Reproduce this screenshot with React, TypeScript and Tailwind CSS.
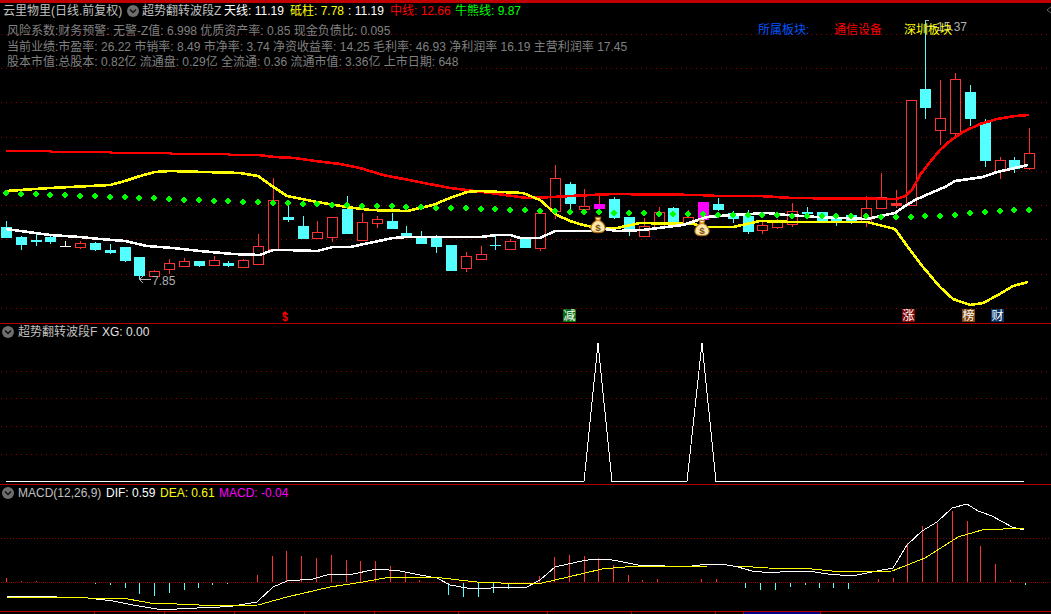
import React from 'react';

type Kind = 'r' | 'c' | 'w' | 'm' | 'R';
// top, bottom, wick top, wick bottom, kind
const candles: [number, number, number, number, Kind][] = [
  [227, 237, 221, 238, 'c'], [237, 244, 236, 250, 'c'], [240, 241, 233, 246, 'c'], [237, 241, 236, 244, 'c'],
  [246, 246, 241, 246, 'w'], [243, 247, 241, 249, 'r'], [243, 249, 242, 251, 'c'], [250, 252, 244, 254, 'c'],
  [247, 260, 247, 262, 'c'], [257, 275, 257, 280, 'c'], [271, 276, 270, 277, 'r'], [263, 269, 259, 274, 'r'],
  [261, 266, 258, 267, 'r'], [261, 265, 261, 267, 'c'], [260, 265, 256, 266, 'r'], [263, 265, 261, 267, 'c'],
  [260, 267, 259, 267, 'r'], [246, 264, 234, 264, 'r'], [200, 249, 178, 249, 'r'], [217, 219, 205, 222, 'c'],
  [226, 238, 216, 239, 'c'], [232, 238, 221, 239, 'r'], [217, 237, 217, 242, 'r'], [209, 233, 196, 233, 'c'],
  [222, 240, 213, 241, 'r'], [219, 223, 216, 228, 'r'], [221, 228, 213, 229, 'c'], [233, 237, 226, 237, 'c'],
  [237, 243, 231, 243, 'c'], [238, 246, 235, 253, 'c'], [245, 270, 245, 270, 'c'], [256, 268, 252, 272, 'r'],
  [254, 259, 246, 260, 'r'], [245, 245, 236, 250, 'c'], [241, 249, 239, 249, 'r'], [238, 247, 238, 248, 'c'],
  [213, 248, 213, 251, 'r'], [178, 211, 165, 219, 'r'], [184, 203, 182, 210, 'c'], [206, 209, 189, 215, 'r'],
  [204, 208, 196, 208, 'm'], [199, 217, 197, 219, 'c'], [217, 231, 217, 236, 'c'], [226, 236, 218, 237, 'r'],
  [212, 227, 207, 227, 'r'], [208, 221, 207, 221, 'c'], [217, 223, 210, 223, 'r'], [202, 219, 202, 219, 'm'],
  [204, 209, 198, 211, 'c'], [213, 218, 211, 223, 'c'], [216, 231, 210, 234, 'c'], [225, 230, 221, 234, 'r'],
  [222, 227, 219, 229, 'r'], [211, 224, 203, 227, 'r'], [212, 213, 207, 214, 'c'], [212, 221, 212, 221, 'c'],
  [219, 221, 213, 226, 'c'], [215, 222, 215, 224, 'c'], [208, 222, 196, 227, 'r'], [197, 208, 173, 208, 'r'],
  [203, 205, 190, 208, 'R'], [100, 205, 100, 205, 'r'], [89, 107, 20, 119, 'c'], [118, 130, 80, 145, 'r'],
  [79, 133, 73, 137, 'r'], [92, 118, 85, 126, 'c'], [122, 160, 119, 167, 'c'], [160, 171, 157, 179, 'r'],
  [160, 168, 157, 173, 'c'], [153, 168, 128, 170, 'r'],
];

const dotYs = [
  193, 194, 194, 195, 195, 196, 196, 197, 197, 198, 198, 199, 200, 200, 201, 201, 202, 202, 203, 203, 204, 204, 205, 205,
  206, 206, 206, 207, 207, 208, 208, 208, 209, 209, 210, 210, 211, 211, 212, 212, 212, 213, 213, 213, 214, 214, 214, 214,
  215, 215, 215, 215, 215, 216, 216, 216, 216, 216, 216, 217, 217, 217, 216, 216, 215, 213, 212, 211, 210, 210,
];

const redLine = '6,151 50,151 52,152 110,152 112,153 170,153 172,154 228,154 230,155 258,155 275,157 295,158 315,161 340,164 360,168 383,175 450,188 483,192 527,198 553,197 570,196 613,194 700,195 717,196 760,196 792,198 897,199 905,196 912,190 920,175 930,162 940,150 950,141 963,132 980,124 997,119 1015,116 1029,115';
const yellowLine = '6,191 50,188 110,185 125,181 140,176 155,172 170,171 240,173 258,176 272,186 287,196 317,202 347,207 370,210 407,211 433,205 450,198 467,192 480,191 523,193 540,200 557,215 570,221 583,225 603,229 617,228 640,223 693,224 708,227 733,227 760,221 793,222 820,222 867,222 895,229 905,243 923,267 940,287 953,299 970,305 983,303 998,295 1013,286 1028,282';
const whiteLine = '6,229 28,232 50,235 80,237 100,239 125,241 147,246 173,248 200,251 233,254 260,255 273,250 287,250 317,251 333,247 350,247 393,238 407,237 480,237 497,235 510,235 520,238 540,238 555,231 590,231 605,229 617,231 643,230 658,228 683,225 698,220 707,217 733,215 767,213 787,215 817,217 867,219 895,213 905,206 915,200 933,192 945,187 955,181 983,177 997,172 1028,165';

const difLine = '6,596 57,597 88,598 113,601 133,605 157,609 177,609 197,608 220,607 233,606 257,602 273,587 287,581 313,579 330,574 353,574 377,569 400,571 420,575 437,578 450,585 467,588 483,589 500,587 525,588 540,580 555,567 568,564 582,561 595,559 605,559 618,561 638,565 665,566 692,566 708,564 722,564 738,567 752,571 772,573 788,571 808,571 828,574 852,576 872,572 893,568 907,545 922,531 937,522 952,508 967,504 978,511 992,516 1012,527 1024,530';
const deaLine = '6,597 88,598 128,599 150,603 177,604 220,606 258,605 287,597 330,587 363,582 390,577 433,577 477,582 525,584 542,583 568,577 602,569 625,567 708,566 738,566 768,568 812,569 842,572 892,571 925,558 958,537 982,530 1024,528';

// x, top of bar; red above zero, cyan below
const macdUp = [
  [6, 578], [21, 581], [36, 581], [50, 582], [257, 575], [272, 556], [286, 551], [301, 556], [316, 558], [331, 555],
  [346, 560], [360, 561], [375, 561], [390, 566], [405, 573], [419, 580], [539, 576], [554, 557], [569, 555], [584, 556],
  [598, 558], [613, 565], [628, 575], [642, 580], [657, 579], [701, 579], [716, 579], [878, 579], [893, 578], [907, 543],
  [922, 526], [937, 523], [952, 511], [967, 521], [980, 546], [995, 564], [1010, 580],
];
const macdDown = [
  [95, 584], [110, 585], [125, 588], [139, 594], [154, 596], [169, 593], [184, 590], [198, 588], [212, 585], [227, 584],
  [433, 583], [448, 595], [463, 597], [478, 597], [493, 593], [508, 589], [745, 588], [760, 590], [775, 590], [790, 587],
  [805, 585], [819, 588], [833, 588], [848, 589], [863, 583], [1025, 585],
];

const Grid = ({ ys, dash = '1 4' }: { ys: number[]; dash?: string }) => (
  <g shapeRendering="crispEdges">
    {ys.map((y) => (
      <line key={y} x1={1} x2={1051} y1={y + 0.5} y2={y + 0.5} stroke="#8c0000" strokeDasharray={dash} />
    ))}
  </g>
);

const Candle = ({ i }: { i: number }) => {
  const [top, bottom, wickTop, wickBottom, kind] = candles[i];
  const x = Math.round(6 + 14.83 * i) + 0.5;
  const color = { r: '#ff3232', R: '#ff3232', c: '#54ffff', w: '#ffffff', m: '#ff00ff' }[kind];
  const wickColor = kind === 'm' ? '#ff3232' : color;
  const hollow = kind === 'r';
  return (
    <g>
      <line x1={x} x2={x} y1={wickTop} y2={top} stroke={wickColor} />
      <line x1={x} x2={x} y1={bottom} y2={wickBottom} stroke={wickColor} />
      {top === bottom ? (
        <line x1={x - 5.5} x2={x + 5.5} y1={top + 0.5} y2={top + 0.5} stroke={color} />
      ) : hollow ? (
        <rect x={x - 5} y={top + 0.5} width={10} height={bottom - top} fill="#000" stroke={color} />
      ) : (
        <rect x={x - 5.5} y={top} width={11} height={bottom - top + 1} fill={color} />
      )}
    </g>
  );
};

const MoneyBag = ({ x, y }: { x: number; y: number }) => (
  <g transform={`translate(${x} ${y}) scale(1.1)`}>
    <path d="M-2.5 -7 L2.5 -7 L1.5 -4 C5 -2 6.5 1 6.5 3 C6.5 6 4 7 0 7 C-4 7 -6.5 6 -6.5 3 C-6.5 1 -5 -2 -1.5 -4 Z" fill="#fbe8a6" stroke="#a86a1c" />
    <rect x={-2} y={-5} width={4} height={1.5} fill="#d8891c" />
    <text x={0} y={5.5} textAnchor="middle" fontSize={9} fontWeight={700} fill="#7a4a12">$</text>
  </g>
);

const Tag = ({ x, bg, label }: { x: number; bg: string; label: string }) => (
  <g>
    <rect x={x} y={309} width={13} height={13} fill={bg} shapeRendering="crispEdges" />
    <text x={x + 6.5} y={320} textAnchor="middle" fontSize={12} fill="#fff">{label}</text>
  </g>
);

const Badge = () => (
  <svg width="12" height="12" viewBox="0 0 12 12" className="shrink-0">
    <circle cx="6" cy="6" r="6" fill="#6e6e6e" />
    <path d="M3 4.5 L6 7.5 L9 4.5" fill="none" stroke="#111" strokeWidth="1.5" />
  </svg>
);

export default function App() {
  return (
    <div className="relative flex h-[614px] w-[1051px] flex-col overflow-hidden bg-black text-xs text-[#c0c0c0] [font-family:'Liberation_Sans','Noto_Sans_CJK_SC',sans-serif]">
      <div className="h-[3px] shrink-0 bg-[#c00000]" />

      {/* main candle pane */}
      <div className="relative h-[321px] shrink-0 border-b border-[#b00000]">
        <svg className="absolute inset-0" width="1051" height="321" viewBox="0 3 1051 321">
          <Grid ys={[34, 68, 102, 137, 171, 205, 239, 274, 308]} />
          <g shapeRendering="crispEdges">
            {candles.map((_, i) => <Candle key={i} i={i} />)}
          </g>
          <g fill="none" strokeWidth={2.6} shapeRendering="crispEdges">
            <polyline points={redLine} stroke="#ff0000" />
            <polyline points={yellowLine} stroke="#ffff00" />
            <polyline points={whiteLine} stroke="#ffffff" />
          </g>
          <g shapeRendering="crispEdges">
            {dotYs.map((y, i) => {
              const x = Math.round(6 + 14.83 * i);
              return <polygon key={i} points={`${x},${y - 3.5} ${x + 3.5},${y} ${x},${y + 3.5} ${x - 3.5},${y}`} fill="#00ff00" />;
            })}
          </g>
          <MoneyBag x={598} y={225} />
          <MoneyBag x={702} y={228} />
          <g stroke="#b0b0b0" fill="none" shapeRendering="crispEdges">
            <path d="M139.5 279.5 H151 M139.5 279.5 L143 276 M139.5 279.5 L143 283" />
            <path d="M925 26.5 H937 M925 20 H929" />
          </g>
          <path d="M1051 7 L1047 10 L1051 13" fill="none" stroke="#666" />
          <text x={152} y={285} fontSize={12} fill="#b0b0b0">7.85</text>
          <text x={937} y={31} fontSize={12} fill="#b0b0b0">15.37</text>
          <path d="M285 311 L288 314 L282 314 Z" fill="#ff0000" />
          <text x={285} y={321} textAnchor="middle" fontSize={10} fontWeight={700} fill="#ff0000">$</text>
          <Tag x={563} bg="#0a6e12" label="减" />
          <Tag x={902} bg="#800808" label="涨" />
          <Tag x={962} bg="#804810" label="榜" />
          <Tag x={991} bg="#0a3468" label="财" />
        </svg>

        <div className="relative flex h-[15px] items-center whitespace-nowrap">
          <span className="ml-[3px] w-[124px]">云里物里(日线.前复权)</span>
          <Badge />
          <span className="ml-[3px] w-[82px]">超势翻转波段Z</span>
          <span className="w-[66px] text-white">天线: 11.19</span>
          <span className="w-[58px] text-[#ffff00]">砥柱: 7.78</span>
          <span className="w-[42px] text-white">: 11.19</span>
          <span className="w-[65px] text-[#ff0000]">中线: 12.66</span>
          <span className="text-[#00ff00]">牛熊线: 9.87</span>
        </div>

        <div className="relative mt-[6px] pl-[7px] leading-[15.5px] whitespace-nowrap text-[#808080]">
          <div>风险系数:财务预警: 无警-Z值: 6.998 优质资产率: 0.85 现金负债比: 0.095</div>
          <div>当前业绩:市盈率: 26.22 市销率: 8.49 市净率: 3.74 净资收益率: 14.25 毛利率: 46.93 净利润率 16.19 主营利润率 17.45</div>
          <div>股本市值:总股本: 0.82亿 流通盘: 0.29亿 全流通: 0.36 流通市值: 3.36亿 上市日期: 648</div>
        </div>

        {/* sector labels sit over the top of the chart */}
        <div className="absolute left-[758px] top-[19px] flex whitespace-nowrap">
          <span className="w-[76px] text-[#0055ff]">所属板块:</span>
          <span className="w-[70px] text-[#ff0000]">通信设备</span>
          <span className="text-[#ffff00]">深圳板块</span>
        </div>
      </div>

      {/* signal pane */}
      <div className="relative h-[161px] shrink-0 border-b border-[#b00000]">
        <svg className="absolute inset-0" width="1051" height="161" viewBox="0 324 1051 161">
          <Grid ys={[371, 398, 426, 454]} />
          <polyline points="6,481.5 584,481.5 598,343 612,481.5 687,481.5 702,343 716,481.5 1024,481.5" fill="none" stroke="#ffffff" shapeRendering="crispEdges" />
        </svg>
        <div className="relative flex h-[16px] items-center whitespace-nowrap pl-[2px]">
          <Badge />
          <span className="ml-[4px] w-[84px]">超势翻转波段F</span>
          <span className="text-[#e0e0e0]">XG: 0.00</span>
        </div>
      </div>

      {/* MACD pane */}
      <div className="relative h-[127px] shrink-0 border-b border-[#b00000]">
        <svg className="absolute inset-0" width="1051" height="127" viewBox="0 485 1051 127">
          <Grid ys={[538]} dash="1 2" />
          <Grid ys={[582]} dash="1 1" />
          <g shapeRendering="crispEdges">
            {macdUp.map(([x, y]) => <line key={x} x1={x + 0.5} x2={x + 0.5} y1={y} y2={582} stroke="#ff3232" />)}
            {macdDown.map(([x, y]) => <line key={x} x1={x + 0.5} x2={x + 0.5} y1={583} y2={y} stroke="#54ffff" />)}
          </g>
          <g fill="none" shapeRendering="crispEdges">
            <polyline points={difLine} stroke="#ffffff" />
            <polyline points={deaLine} stroke="#ffff00" />
          </g>
        </svg>
        <div className="relative flex h-[16px] items-center whitespace-nowrap pl-[2px]">
          <Badge />
          <span className="ml-[4px] w-[88px]">MACD(12,26,9)</span>
          <span className="w-[54px] text-white">DIF: 0.59</span>
          <span className="w-[59px] text-[#ffff00]">DEA: 0.61</span>
          <span className="text-[#ff00ff]">MACD: -0.04</span>
        </div>
      </div>

      {/* date axis ticks */}
      <svg className="shrink-0" width="1051" height="2" viewBox="0 0 1051 2">
        <rect x={743} y={0} width={77} height={2} fill="#000080" />
        {[94, 164, 234, 304, 374, 458, 547, 631, 715, 743, 820].map((x) => (
          <rect key={x} x={x} y={0} width={1} height={2} fill="#b00000" />
        ))}
      </svg>
    </div>
  );
}
